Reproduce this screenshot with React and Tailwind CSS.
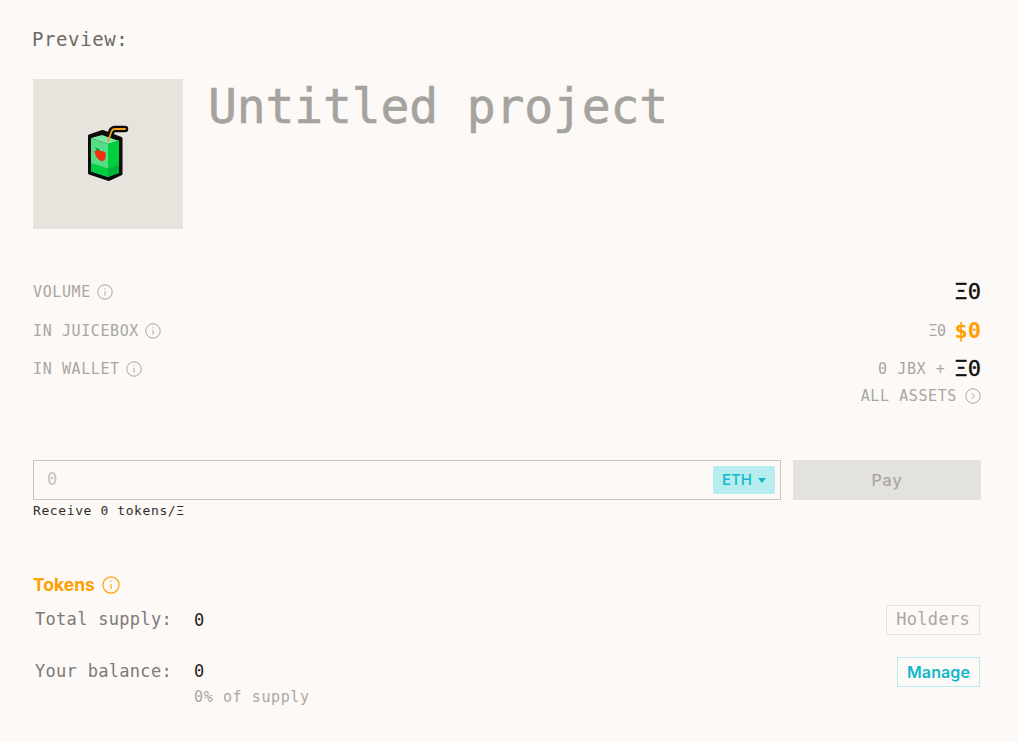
const mono = "font-['DejaVu_Sans_Mono','Liberation_Mono',monospace]";

function InfoIcon({ className }) {
	return (
		<svg viewBox="0 0 16 16" fill="none" stroke="currentColor" strokeWidth="1" className={className}>
			<circle cx="8" cy="8" r="7.2" />
			<path d="M8 7v4.500" />
			<path d="M8 4.200v1.200" />
		</svg>
	);
}

function JuiceBox() {
	return (
		<svg viewBox="70 116 76 76" className="w-[76px] h-[76px]">
			<path d="M108 141l3.500-9.500q1-2.500 3.500-2.500h10" fill="none" stroke="#0c0c0c" strokeWidth="6.500" strokeLinecap="round" />
			<path d="M89.500 136l13-4.500 18.500 7v35.500l-12 5.500-19.500-6.500z" fill="#0c0c0c" stroke="#0c0c0c" strokeWidth="3" strokeLinejoin="round" />
			<path d="M91 138l11-3 17 6-11 3z" fill="#7ce8a4" />
			<path d="M91 138l17 6v33l-17-5.500z" fill="#55de88" />
			<path d="M91 163l17 5.500v8.500l-17-5.500z" fill="#00cc44" />
			<path d="M108 144l11-4v33l-11 4z" fill="#00cf3c" />
			<path d="M108 168.500l11-3.500v8l-11 4z" fill="#00b33a" />
			<path d="M108 141l3.500-9.500q1-2.500 3.500-2.500h10" fill="none" stroke="#f5a312" strokeWidth="1.800" strokeLinecap="round" />
			<path d="M95 147l4 2 2 3-4-1z" fill="#0b9b3c" />
			<path d="M94.500 151q3-1.500 5.500 0 3-.5 5.500 1.500.5 4.500-.5 7l-3 2-3.500-2q-3.500-3.500-4-8.500z" fill="#f52d0f" />
		</svg>
	);
}

function StatLabel({ children }) {
	return (
		<div className={`flex items-center gap-[6px] text-[15px] leading-[20px] tracking-[0.600px] text-[#a8a6a2] ${mono}`}>
			<span>{children}</span>
			<InfoIcon className="w-4 h-4" />
		</div>
	);
}

function StatRow({ label, children }) {
	return (
		<div className="flex justify-between items-start h-[38.500px]">
			<StatLabel>{label}</StatLabel>
			<div className="flex items-center">{children}</div>
		</div>
	);
}

const bigEth = `text-[22px] leading-[20px] text-[#111] [-webkit-text-stroke:0.4px_#111] ${mono}`;

export default function App() {
	return (
		<div className="min-h-screen w-full bg-[#fdf9f6] pl-[33px] pr-[37px] pt-[26px] overflow-hidden">
			<div className={`text-[19px] leading-[26px] tracking-[0.600px] text-[#6b6965] -ml-[1px] ${mono}`}>Preview:</div>

			<div className="flex gap-[25px] mt-[27px]">
				<div className="w-[150px] h-[150px] bg-[#e7e3dd] flex items-center justify-center">
					<JuiceBox />
				</div>
				<h1 className={`text-[48px] leading-[56px] -mt-[1px] -tracking-[0.150px] text-[#a5a3a0] [-webkit-text-stroke:0.6px_#a5a3a0] ${mono}`}>Untitled project</h1>
			</div>

			<div className="mt-[53px]">
				<StatRow label="VOLUME">
					<span className={bigEth}>Ξ0</span>
				</StatRow>
				<StatRow label="IN JUICEBOX">
					<span className={`text-[15px] leading-[20px] -tracking-[0.500px] text-[#a8a6a2] mr-[9px] ${mono}`}>Ξ0</span>
					<span className={`text-[22px] leading-[20px] font-bold text-[#ffa000] ${mono}`}>$0</span>
				</StatRow>
				<div className="flex justify-between items-start">
					<StatLabel>IN WALLET</StatLabel>
					<div className="flex items-center">
						<span className={`text-[15px] leading-[20px] tracking-[0.600px] text-[#a8a6a2] mr-[9px] ${mono}`}>0 JBX +</span>
						<span className={bigEth}>Ξ0</span>
					</div>
				</div>
				<div className={`flex justify-end items-center gap-[8px] mt-[8px] text-[15px] leading-[18px] tracking-[0.600px] text-[#a8a6a2] ${mono}`}>
					ALL ASSETS
					<svg viewBox="0 0 16 16" fill="none" stroke="currentColor" strokeWidth="1" className="w-4 h-4">
						<circle cx="8" cy="8" r="7.200" />
						<path d="M6.800 5.200L9.500 8l-2.700 2.800" />
					</svg>
				</div>
			</div>

			<div className="flex gap-3 mt-[55px]">
				<div className="flex-1 h-10 border border-[#c9c4bf] flex items-center justify-between pl-[13px] pr-[5px]">
					<span className={`text-[17px] text-[#c4c2be] ${mono}`}>0</span>
					<div className="h-7 w-[62px] rounded-[1px] bg-[#b8edef] flex items-center justify-center gap-[6px] text-[#12b8c9] text-[15px] font-['Inter',sans-serif] font-medium">
						ETH
						<span className="w-0 h-0 border-x-[4px] border-x-transparent border-t-[5px] border-t-[#12b8c9]" />
					</div>
				</div>
				<button className="w-[188px] h-10 rounded-[1px] bg-[#e3e2de] text-[#a8a6a2] text-[16px] tracking-[1px] font-['Inter',sans-serif] font-medium">
					Pay
				</button>
			</div>
			<div className={`text-[13px] leading-[16px] mt-[3px] tracking-[0.600px] text-[#2e2d2b] ${mono}`}>Receive 0 tokens/Ξ</div>

			<div className="flex items-center gap-[7px] mt-[56px]">
				<span className="text-[17.500px] leading-[20px] font-bold text-[#ffa000] font-['Inter',sans-serif]">Tokens</span>
				<InfoIcon className="w-[18px] h-[18px] text-[#ffa000]" />
			</div>

			<div className="flex justify-between items-start mt-[10px] pl-[2px] pr-[1px] h-[52px]">
				<div className="flex mt-[3px]">
					<span className={`w-[159px] text-[17px] leading-[22px] tracking-[0.300px] text-[#7c7a76] ${mono}`}>Total supply:</span>
					<span className={`text-[17px] leading-[24px] text-[#222] ${mono}`}>0</span>
				</div>
				<button className={`h-[30px] px-[9px] border border-[#e4e2dd] text-[17px] tracking-[0.300px] text-[#aaa8a4] ${mono}`}>Holders</button>
			</div>

			<div className="flex justify-between items-start pl-[2px] pr-[1px]">
				<div className="flex mt-[3px]">
					<span className={`w-[159px] text-[17px] leading-[22px] tracking-[0.300px] text-[#7c7a76] ${mono}`}>Your balance:</span>
					<div>
						<div className={`text-[17px] leading-[24px] -mt-[1px] text-[#222] ${mono}`}>0</div>
						<div className={`text-[15px] leading-[18px] mt-[5px] tracking-[0.600px] text-[#aaa8a4] ${mono}`}>0% of supply</div>
					</div>
				</div>
				<button className="h-[30px] px-[9px] border border-[#b8edef] text-[16px] tracking-[0.100px] font-semibold text-[#12b8c9] font-['Inter',sans-serif]">Manage</button>
			</div>
		</div>
	);
}
